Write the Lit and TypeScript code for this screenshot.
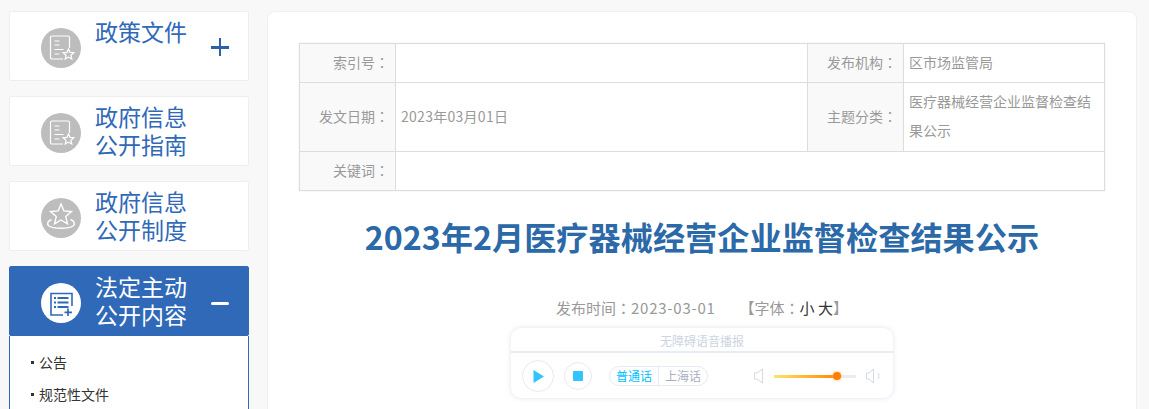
import { LitElement, html, css, svg } from "lit";
import { customElement } from "lit/decorators.js";

const starPts = (cx: number, cy: number, R: number, r: number) => {
  const p: string[] = [];
  for (let i = 0; i < 10; i++) {
    const a = -Math.PI / 2 + (i * Math.PI) / 5;
    const q = i % 2 ? r : R;
    p.push(`${(cx + q * Math.cos(a)).toFixed(2)},${(cy + q * Math.sin(a)).toFixed(2)}`);
  }
  return p.join(" ");
};

const docStar = svg`<svg class="ico" viewBox="0 0 40 40" fill="none" stroke="#fff" stroke-width="1.2">
  <path d="M22 31H11a1.5 1.5 0 0 1-1.500-1.500V9.500A1.500 1.500 0 0 1 11 8h16a1.500 1.500 0 0 1 1.500 1.500V20"/>
  <path d="M13.500 13h5M13.500 17h5M13.500 21.500h9M13.500 26h5"/>
  <polygon points="${starPts(27.5, 26.5, 5.6, 2.6)}" fill="#bdbdbd"/></svg>`;

const starRing = svg`<svg class="ico" viewBox="0 0 40 40" fill="none" stroke="#fff" stroke-width="1.4">
  <polygon points="${starPts(20, 17, 11, 5)}"/>
  <path d="M10.500 21.500C6.500 23 5.500 26 8 28c4 3 20 3 24 0 2.500-2 1.500-5-2.500-6.500"/></svg>`;

const docPlus = svg`<svg class="ico" viewBox="0 0 40 40" fill="none" stroke="#2f69b8" stroke-width="1.6">
  <path d="M22 32H10V10.500h21V23"/>
  <path d="M13 15h2M16.500 15h11M13 19.500h2M16.500 19.500h11M13 24h2M16.500 24h11" stroke-width="2"/>
  <path d="M27 25.500v7.500M23.500 29.300h7.500" stroke-width="1.700"/></svg>`;

@customElement("app-root")
export class AppRoot extends LitElement {
  static styles = css`
    :host {
      display: block;
      height: 409px;
      overflow: hidden;
      background: #f8f8f8;
      font-family: "Noto Sans CJK SC", "Liberation Sans", sans-serif;
    }
    .page { display: flex; gap: 18px; padding: 11px 12px 0 9px; align-items: flex-start; }
    .side { width: 240px; flex: none; display: flex; flex-direction: column; gap: 15px; }
    .card {
      box-sizing: border-box;
      height: 70px;
      background: #fff;
      border: 1px solid #eeeeee;
      border-radius: 2px;
      display: flex;
      position: relative;
      padding: 16px 0 0 31px;
    }
    .group .card.on { background: #2f69b8; border-color: #2f69b8; }
    .circle { width: 40px; height: 40px; border-radius: 50%; background: #bdbdbd; flex: none; }
    .on .circle { background: #fff; }
    .ico { display: block; width: 40px; height: 40px; }
    .name {
      margin: -11px 0 0 14px;
      width: 93px;
      font-size: 23px;
      line-height: 28px;
      color: #2f69b8;
    }
    .on .name { color: #fff; }
    .toggle { position: absolute; left: 201px; top: 34px; width: 18px; height: 2.500px; background: #2b62a5; }
    .toggle.plus::after {
      content: ""; position: absolute; left: 7.750px; top: -8px; width: 2.500px; height: 18px; background: #2b62a5;
    }
    .toggle.minus { background: #fff; top: 35px; border-radius: 2px; }
    .sub {
      box-sizing: border-box;
      border: 1px solid #2f69b8;
      border-top: none;
      padding: 10px 0 0 21px;
      height: 100px;
      background: #fff;
      list-style: none;
      margin: 0;
    }
    .sub li {
      display: flex; align-items: center; gap: 5px;
      font-size: 14px; line-height: 32px; color: #333;
    }
    .sub li::before { content: ""; width: 3px; height: 3px; background: #333; flex: none; }
    .group { display: flex; flex-direction: column; }

    .main {
      box-sizing: border-box;
      width: 870px;
      height: 420px;
      background: #fff;
      border: 1px solid #f0f0f0;
      border-radius: 8px;
      padding: 31px 31px 0 31px;
    }
    table {
      border-collapse: collapse;
      width: 805px;
      table-layout: fixed;
      border: 1px solid #dddddd;
      box-shadow: 0 0 1px #ddd;
      font-size: 14px;
      color: #999;
    }
    th, td { border: 1px solid #dddddd; padding: 0 5px 2px; font-weight: 400; line-height: 29px; }
    th { background: #f9f9f9; text-align: right; padding-right: 6px; }
    tr { height: 39px; }
    tr.tall { height: 69px; }
    .col-a { width: 96px; }
    .col-b { width: 412px; }
    .col-c { width: 96px; }
    .col-d { width: 201px; }
    .c { font-family: "Noto Sans CJK TC", sans-serif; }
    .date { letter-spacing: 0.28px; }
    h1 {
      margin: 22px 0 0;
      text-align: center;
      font-size: 32.200px;
      line-height: 46px;
      font-weight: 700;
      color: #2b69a8;
    }
    .meta { margin-top: 38px; display: flex; justify-content: center; font-size: 15px; line-height: 22px; color: #999; gap: 24px; }
    .meta b { font-weight: 400; color: #333; }
    .digits { letter-spacing: 0.75px; }
    .player {
      box-sizing: border-box;
      width: 382px;
      height: 70px;
      margin: 9px 0 0 212px;
      border-radius: 10px;
      background: #fff;
      box-shadow: 0 0 5px rgba(190, 200, 220, 0.5);
    }
    .ptitle {
      height: 23px; line-height: 25px; text-align: center; font-size: 12px; color: #cdd3e2;
      border-bottom: 2px solid #e9edf3;
    }
    .controls { display: flex; align-items: center; padding: 7px 0 0 11px; }
    .round { border: 1px solid #e6eaf2; border-radius: 50%; display: flex; align-items: center; justify-content: center; box-sizing: border-box; flex: none; }
    .play { width: 32px; height: 32px; margin-right: 10px; }
    .stop { width: 28px; height: 28px; margin-right: 17px; }
    .stop i { width: 10px; height: 10px; border-radius: 1px; background: #33c4ff; display: block; }
    .seg {
      display: flex; height: 20px; width: 99px; box-sizing: border-box;
      border: 1px solid #e6eaf2; border-radius: 10px; font-size: 12px; line-height: 18px; color: #a9aec2;
      margin-right: 46px;
    }
    .seg span { flex: 1; text-align: center; }
    .seg .act { color: #00bfff; border-right: 1px solid #e6eaf2; }
    .track { width: 82px; height: 3px; background: #e9edf3; margin: 0 10px 0 10px; position: relative; flex: none; }
    .fill { width: 63px; height: 3px; background: linear-gradient(90deg, #ffe36a, #ff8a00); position: relative; }
    .knob {
      position: absolute; right: -4px; top: -2.500px; width: 8px; height: 8px; border-radius: 50%;
      background: #ff7f00; box-shadow: 0 0 3px #ffb060;
    }
    .spk { display: block; flex: none; }
  `;

  private card(title: string, icon: unknown, toggle = "", on = false) {
    return html`<div class="card ${on ? "on" : ""}">
      <div class="circle">${icon}</div>
      <div class="name">${title}</div>
      ${toggle ? html`<span class="toggle ${toggle}"></span>` : ""}
    </div>`;
  }

  render() {
    const colon = html`<span class="c">：</span>`;
    return html`<div class="page">
      <aside class="side">
        ${this.card("政策文件", docStar, "plus")}
        ${this.card("政府信息公开指南", docStar)}
        ${this.card("政府信息公开制度", starRing)}
        <div class="group">
          ${this.card("法定主动公开内容", docPlus, "minus", true)}
          <ul class="sub"><li>公告</li><li>规范性文件</li></ul>
        </div>
      </aside>
      <main class="main">
        <table>
          <colgroup><col class="col-a" /><col class="col-b" /><col class="col-c" /><col class="col-d" /></colgroup>
          <tr><th>索引号${colon}</th><td></td><th>发布机构${colon}</th><td>区市场监管局</td></tr>
          <tr class="tall"><th>发文日期${colon}</th><td class="date">2023年03月01日</td><th>主题分类${colon}</th><td>医疗器械经营企业监督检查结果公示</td></tr>
          <tr><th>关键词${colon}</th><td colspan="3"></td></tr>
        </table>
        <h1>2023年2月医疗器械经营企业监督检查结果公示</h1>
        <div class="meta"><span>发布时间${colon}<span class="digits">2023-03-01</span></span><span>【字体${colon}<b>小 大</b>】</span></div>
        <div class="player">
          <div class="ptitle">无障碍语音播报</div>
          <div class="controls">
            <div class="round play">
              <svg width="13" height="15" viewBox="0 0 13 15"><path d="M1.500 1v13l10.500-6.500z" fill="#33c4ff"/></svg>
            </div>
            <div class="round stop"><i></i></div>
            <div class="seg"><span class="act">普通话</span><span>上海话</span></div>
            <svg class="spk" width="10" height="16" viewBox="0 0 10 16" fill="none" stroke="#d5d9e2"><path d="M.5 5h2.500L8.500 1v14L3 11H.5z"/></svg>
            <div class="track"><div class="fill"><i class="knob"></i></div></div>
            <svg class="spk" width="16" height="16" viewBox="0 0 16 16" fill="none" stroke="#d5d9e2"><path d="M.5 5h2.500L7.500 1v14L3 11H.5z"/><path d="M12 5c1.300 2 1.300 4 0 6"/></svg>
          </div>
        </div>
      </main>
    </div>`;
  }
}
